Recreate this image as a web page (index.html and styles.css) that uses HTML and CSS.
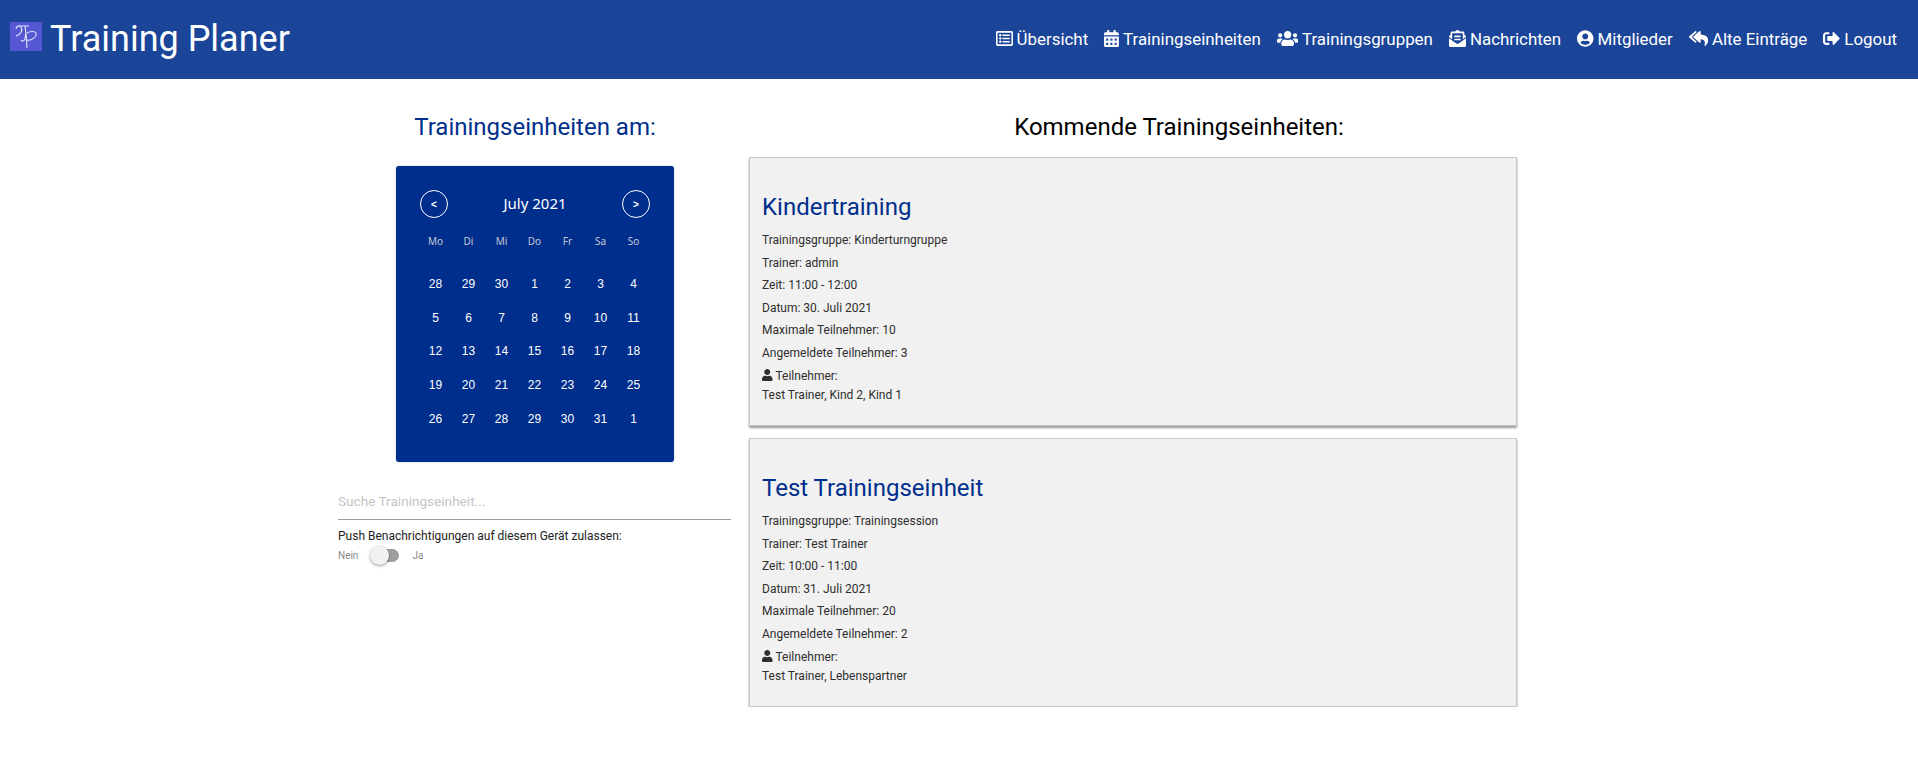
FILE: index.html
```html
<!DOCTYPE html>
<html lang="de">
  <head>
    <meta charset="UTF-8" />
    <title>Training Planer</title>
    <link rel="stylesheet" href="styles.css">
  </head>

  <body>
    <header class="topbar">
      <div class="brand">
        <svg class="brand-logo" viewBox="0 0 32 29">
          <rect width="32" height="29" fill="#5558d2" />
          <path d="M6 7c0-3 4-4 5-2 2 3 0 8-5 9M11 4h8M15 4c1 4 1 9 0 13-1 2-3 3-4 1M17 26l-1-15M17 11c3-2 8-2 9 0 1 4-5 8-9 7" fill="none" stroke="#e3e4f8" stroke-width="1.1" />
        </svg>
        <h1>Training Planer</h1>
      </div>
      <nav class="nav">
        <a href="#"><svg class="ico" viewBox="0 0 512 512"><path d="M464 32H48C21.49 32 0 53.49 0 80v352c0 26.51 21.49 48 48 48h416c26.51 0 48-21.49 48-48V80c0-26.51-21.49-48-48-48zm-6 400H54a6 6 0 0 1-6-6V86a6 6 0 0 1 6-6h404a6 6 0 0 1 6 6v340a6 6 0 0 1-6 6zm-42-92v24c0 6.627-5.373 12-12 12H204c-6.627 0-12-5.373-12-12v-24c0-6.627 5.373-12 12-12h200c6.627 0 12 5.373 12 12zm0-96v24c0 6.627-5.373 12-12 12H204c-6.627 0-12-5.373-12-12v-24c0-6.627 5.373-12 12-12h200c6.627 0 12 5.373 12 12zm0-96v24c0 6.627-5.373 12-12 12H204c-6.627 0-12-5.373-12-12v-24c0-6.627 5.373-12 12-12h200c6.627 0 12 5.373 12 12zm-252 12c0 19.882-16.118 36-36 36s-36-16.118-36-36 16.118-36 36-36 36 16.118 36 36zm0 96c0 19.882-16.118 36-36 36s-36-16.118-36-36 16.118-36 36-36 36 16.118 36 36zm0 96c0 19.882-16.118 36-36 36s-36-16.118-36-36 16.118-36 36-36 36 16.118 36 36z"/></svg>Übersicht</a>
        <a href="#"><svg class="ico" viewBox="0 0 448 512"><path d="M0 464c0 26.5 21.5 48 48 48h352c26.5 0 48-21.5 48-48V192H0v272zm320-196c0-6.6 5.4-12 12-12h40c6.6 0 12 5.4 12 12v40c0 6.6-5.4 12-12 12h-40c-6.6 0-12-5.4-12-12v-40zm0 128c0-6.6 5.4-12 12-12h40c6.6 0 12 5.4 12 12v40c0 6.6-5.4 12-12 12h-40c-6.6 0-12-5.4-12-12v-40zM192 268c0-6.6 5.4-12 12-12h40c6.6 0 12 5.4 12 12v40c0 6.6-5.4 12-12 12h-40c-6.6 0-12-5.4-12-12v-40zm0 128c0-6.6 5.4-12 12-12h40c6.6 0 12 5.4 12 12v40c0 6.6-5.4 12-12 12h-40c-6.6 0-12-5.4-12-12v-40zM64 268c0-6.6 5.4-12 12-12h40c6.6 0 12 5.4 12 12v40c0 6.6-5.4 12-12 12H76c-6.6 0-12-5.4-12-12v-40zm0 128c0-6.6 5.4-12 12-12h40c6.6 0 12 5.4 12 12v40c0 6.6-5.4 12-12 12H76c-6.6 0-12-5.4-12-12v-40zM400 64h-48V16c0-8.8-7.2-16-16-16h-32c-8.8 0-16 7.2-16 16v48H160V16c0-8.8-7.2-16-16-16h-32c-8.8 0-16 7.2-16 16v48H48C21.5 64 0 85.5 0 112v48h448v-48c0-26.5-21.5-48-48-48z"/></svg>Trainingseinheiten</a>
        <a href="#"><svg class="ico" viewBox="0 0 640 512"><path d="M96 224c35.3 0 64-28.7 64-64s-28.7-64-64-64-64 28.7-64 64 28.7 64 64 64zm448 0c35.3 0 64-28.7 64-64s-28.7-64-64-64-64 28.7-64 64 28.7 64 64 64zm32 32h-64c-17.6 0-33.5 7.1-45.1 18.6 40.3 22.1 68.9 62 75.1 109.4h66c17.7 0 32-14.3 32-32v-32c0-35.3-28.7-64-64-64zm-256 0c61.9 0 112-50.1 112-112S381.9 32 320 32 208 82.1 208 144s50.1 112 112 112zm76.8 32h-8.3c-20.8 10-43.9 16-68.5 16s-47.6-6-68.5-16h-8.3C179.6 288 128 339.6 128 403.2V432c0 26.5 21.5 48 48 48h288c26.5 0 48-21.5 48-48v-28.8c0-63.6-51.6-115.2-115.2-115.2zm-223.7-13.4C161.5 263.1 145.6 256 128 256H64c-35.3 0-64 28.7-64 64v32c0 17.7 14.3 32 32 32h65.9c6.3-47.4 34.9-87.3 75.2-109.4z"/></svg>Trainingsgruppen</a>
        <a href="#"><svg class="ico" viewBox="0 0 512 512"><path d="M176 216h160c8.84 0 16-7.16 16-16v-16c0-8.84-7.16-16-16-16H176c-8.84 0-16 7.16-16 16v16c0 8.84 7.16 16 16 16zm-16 80c0 8.84 7.16 16 16 16h160c8.84 0 16-7.16 16-16v-16c0-8.84-7.16-16-16-16H176c-8.84 0-16 7.16-16 16v16zm96 121.13c-16.42 0-32.84-5.06-46.86-15.19L0 250.86V464c0 26.51 21.49 48 48 48h416c26.51 0 48-21.49 48-48V250.86L302.86 401.94c-14.02 10.12-30.44 15.19-46.86 15.19zm237.61-254.18c-8.85-6.94-17.24-13.47-29.61-22.81V96c0-26.51-21.49-48-48-48h-77.55c-3.04-2.2-5.87-4.26-9.04-6.56C312.6 29.17 279.2-.35 256 0c-23.2-.35-56.59 29.17-73.41 41.44-3.17 2.3-6 4.36-9.04 6.56H96c-26.51 0-48 21.49-48 48v44.14c-12.37 9.33-20.76 15.87-29.61 22.81A47.995 47.995 0 0 0 0 200.72v10.65l96 69.35V96h320v184.72l96-69.35v-10.65c0-14.74-6.78-28.67-18.39-37.77z"/></svg>Nachrichten</a>
        <a href="#"><svg class="ico" viewBox="0 0 496 512"><path d="M248 8C111 8 0 119 0 256s111 248 248 248 248-111 248-248S385 8 248 8zm0 96c48.6 0 88 39.4 88 88s-39.4 88-88 88-88-39.4-88-88 39.4-88 88-88zm0 344c-58.7 0-111.3-26.6-146.5-68.2 18.8-35.4 55.6-59.8 98.5-59.8 2.4 0 4.8.4 7.1 1.1 13 4.2 26.6 6.9 40.9 6.9 14.3 0 28-2.7 40.9-6.9 2.3-.7 4.7-1.1 7.1-1.1 42.9 0 79.7 24.4 98.5 59.8C359.3 421.4 306.7 448 248 448z"/></svg>Mitglieder</a>
        <a href="#"><svg class="ico" viewBox="0 0 576 512"><path d="M136.309 189.836L312.313 37.851C327.72 24.546 352 35.348 352 56.015v82.763c129.182 10.231 224 52.212 224 183.548 0 61.441-39.582 122.309-83.333 154.132-13.653 9.931-33.111-2.533-28.077-18.631 38.512-123.162-3.922-169.482-112.59-182.015v84.175c0 20.701-24.3 31.453-39.687 18.164L136.309 226.164c-11.071-9.561-11.086-26.753 0-36.328zm-128 36.328L184.313 378.15C199.7 391.439 224 380.687 224 359.986v-15.818l-108.606-93.785A55.96 55.96 0 0 1 96 207.998a55.953 55.953 0 0 1 19.393-42.38L224 71.832V56.015c0-20.667-24.28-31.469-39.687-18.164L8.309 189.836c-11.086 9.575-11.071 26.767 0 36.328z"/></svg>Alte Einträge</a>
        <a href="#"><svg class="ico" viewBox="0 0 512 512"><path d="M497 273L329 441c-15 15-41 4.5-41-17v-96H152c-13.3 0-24-10.7-24-24v-96c0-13.3 10.7-24 24-24h136V88c0-21.4 25.9-32 41-17l168 168c9.3 9.4 9.3 24.6 0 34zM192 436v-40c0-6.6-5.4-12-12-12H96c-17.7 0-32-14.3-32-32V160c0-17.7 14.3-32 32-32h84c6.6 0 12-5.4 12-12V76c0-6.6-5.4-12-12-12H96c-53 0-96 43-96 96v192c0 53 43 96 96 96h84c6.6 0 12-5.4 12-12z"/></svg>Logout</a>
      </nav>
    </header>

    <main class="content">
      <section class="side">
        <h2 class="side-title">Trainingseinheiten am:</h2>
        <div class="calendar">
          <div class="cal-head">
            <button class="cal-btn">&lt;</button>
            <span class="cal-month">July 2021</span>
            <button class="cal-btn">&gt;</button>
          </div>
          <div class="cal-week">
            <span>Mo</span><span>Di</span><span>Mi</span><span>Do</span><span>Fr</span><span>Sa</span><span>So</span>
          </div>
          <div class="cal-days">
            <span>28</span><span>29</span><span>30</span><span>1</span><span>2</span><span>3</span><span>4</span>
            <span>5</span><span>6</span><span>7</span><span>8</span><span>9</span><span>10</span><span>11</span>
            <span>12</span><span>13</span><span>14</span><span>15</span><span>16</span><span>17</span><span>18</span>
            <span>19</span><span>20</span><span>21</span><span>22</span><span>23</span><span>24</span><span>25</span>
            <span>26</span><span>27</span><span>28</span><span>29</span><span>30</span><span>31</span><span>1</span>
          </div>
        </div>
        <input class="search" type="text" placeholder="Suche Trainingseinheit..." />
        <p class="push-label">Push Benachrichtigungen auf diesem Gerät zulassen:</p>
        <div class="switch">
          <span>Nein</span>
          <span class="lever"></span>
          <span>Ja</span>
        </div>
      </section>

      <section class="upcoming">
        <h2 class="upcoming-title">Kommende Trainingseinheiten:</h2>
        <article class="card">
          <h3>Kindertraining</h3>
          <p>Trainingsgruppe: Kinderturngruppe</p>
          <p>Trainer: admin</p>
          <p>Zeit: 11:00 - 12:00</p>
          <p>Datum: 30. Juli 2021</p>
          <p>Maximale Teilnehmer: 10</p>
          <p>Angemeldete Teilnehmer: 3</p>
          <p class="members-label"><svg class="ico-user" viewBox="0 0 448 512"><path d="M224 256c70.7 0 128-57.3 128-128S294.7 0 224 0 96 57.3 96 128s57.3 128 128 128zm89.6 32h-16.7c-22.2 10.2-46.9 16-72.9 16s-50.6-5.8-72.9-16h-16.7C60.2 288 0 348.2 0 422.4V464c0 26.5 21.5 48 48 48h352c26.5 0 48-21.5 48-48v-41.6c0-74.2-60.2-134.4-134.4-134.4z"/></svg>Teilnehmer:</p>
          <p class="members">Test Trainer, Kind 2, Kind 1</p>
        </article>
        <article class="card">
          <h3>Test Trainingseinheit</h3>
          <p>Trainingsgruppe: Trainingsession</p>
          <p>Trainer: Test Trainer</p>
          <p>Zeit: 10:00 - 11:00</p>
          <p>Datum: 31. Juli 2021</p>
          <p>Maximale Teilnehmer: 20</p>
          <p>Angemeldete Teilnehmer: 2</p>
          <p class="members-label"><svg class="ico-user" viewBox="0 0 448 512"><path d="M224 256c70.7 0 128-57.3 128-128S294.7 0 224 0 96 57.3 96 128s57.3 128 128 128zm89.6 32h-16.7c-22.2 10.2-46.9 16-72.9 16s-50.6-5.8-72.9-16h-16.7C60.2 288 0 348.2 0 422.4V464c0 26.5 21.5 48 48 48h352c26.5 0 48-21.5 48-48v-41.6c0-74.2-60.2-134.4-134.4-134.4z"/></svg>Teilnehmer:</p>
          <p class="members">Test Trainer, Lebenspartner</p>
        </article>
      </section>
    </main>
  </body>
</html>
```

FILE: styles.css
```css
html, body {
  margin: 0;
  padding: 0;
  font-family: Roboto, 'Liberation Sans', sans-serif;
  background: #fff;
  color: #000;
}

.topbar {
  display: flex;
  justify-content: space-between;
  align-items: center;
  height: 79px;
  padding: 0 21px 2px 10px;
  box-sizing: border-box;
  background: #1a4599;
}

.brand {
  display: flex;
  align-items: center;
  gap: 8px;
}

.brand-logo {
  width: 32px;
  height: 29px;
  margin-bottom: 4px;
}

.brand h1 {
  margin: 0;
  font-size: 36px;
  font-weight: 400;
  line-height: 44px;
  color: #fff;
}

.nav {
  display: flex;
  gap: 16px;
}

.nav a {
  display: flex;
  align-items: center;
  gap: 4px;
  font-size: 16.9px;
  line-height: 20px;
  color: #fff;
  text-decoration: none;
}

.ico {
  height: 17px;
  width: auto;
  fill: #fff;
}

.content {
  display: flex;
  gap: 17px;
  padding-left: 338px;
}

.side {
  width: 394px;
  flex: none;
}

.side-title {
  margin: 0;
  padding-top: 34px;
  font-size: 24px;
  line-height: 29px;
  font-weight: 400;
  text-align: center;
  color: #002e8c;
}

.calendar {
  width: 278px;
  height: 296px;
  margin: 24px auto 0;
  padding: 24px 0 0;
  box-sizing: border-box;
  border-radius: 3px;
  background: #002e8c;
  box-shadow: 0 0 2px rgba(0, 46, 140, 0.3);
  color: #fff;
}

.cal-head {
  display: flex;
  justify-content: space-between;
  align-items: center;
  padding: 0 24px;
}

.cal-month {
  margin-bottom: 2px;
  font-family: 'Noto Sans', sans-serif;
  font-size: 15px;
  line-height: 26px;
}

.cal-btn {
  width: 28px;
  height: 28px;
  padding: 0;
  border: 1px solid #fff;
  border-radius: 50%;
  background: transparent;
  color: #fff;
  font-family: 'Liberation Sans', sans-serif;
  font-size: 10px;
  font-weight: 700;
}

.cal-week,
.cal-days {
  display: grid;
  grid-template-columns: repeat(7, 33px);
  padding-left: 23px;
  text-align: center;
}

.cal-week {
  margin-top: 13px;
  font-family: 'Noto Sans', sans-serif;
  font-size: 10px;
  line-height: 20px;
  color: #c4c8d4;
}

.cal-days {
  margin-top: 16px;
  font-family: 'Liberation Sans', sans-serif;
  font-size: 12px;
  grid-auto-rows: 33.7px;
  align-items: center;
}

.search {
  display: block;
  width: 393px;
  height: 39px;
  margin-top: 19px;
  padding: 1px 0 0;
  box-sizing: border-box;
  border: none;
  border-bottom: 1px solid #9e9e9e;
  outline: none;
  background: transparent;
  font-family: Roboto, sans-serif;
  font-size: 13.6px;
}

.search::placeholder {
  color: #c4c4c4;
}

.push-label {
  margin: 9px 0 0;
  font-size: 12px;
  line-height: 14px;
  color: #222;
}

.switch {
  display: flex;
  align-items: center;
  margin-top: 1px;
  height: 22px;
  font-size: 10px;
  color: #8a8a8a;
}

.lever {
  position: relative;
  display: block;
  width: 26px;
  height: 13px;
  margin: 0 13px 0 15px;
  border-radius: 8px;
  background: #9e9e9e;
}

.lever::after {
  content: "";
  position: absolute;
  left: -3px;
  top: -3px;
  width: 19px;
  height: 19px;
  border-radius: 50%;
  background: #f1f1f1;
  box-shadow: 0 1px 3px rgba(0, 0, 0, 0.4);
}

.upcoming {
  width: 860px;
  flex: none;
}

.upcoming-title {
  margin: 0;
  padding-top: 34px;
  font-size: 24px;
  line-height: 29px;
  font-weight: 400;
  text-align: center;
}

.card {
  width: 768px;
  height: 269px;
  margin-top: 15px;
  padding: 33px 12px 0;
  box-sizing: border-box;
  border: 1px solid #c8c8c8;
  background: #f1f1f1;
  box-shadow: 0 2px 2px rgba(0, 0, 0, 0.4);
}

.card + .card {
  margin-top: 12px;
}

.card h3 {
  margin: 0 0 6px;
  font-size: 24px;
  line-height: 32px;
  font-weight: 400;
  color: #002e8c;
}

.card p {
  margin: 0;
  font-size: 12px;
  line-height: 22.6px;
  color: #2e2e2e;
}

.card .members-label {
  line-height: 22px;
}

.card .members {
  line-height: 16px;
}

.ico-user {
  height: 12px;
  width: auto;
  margin-right: 3px;
  vertical-align: -1px;
  fill: #2e2e2e;
}
```
